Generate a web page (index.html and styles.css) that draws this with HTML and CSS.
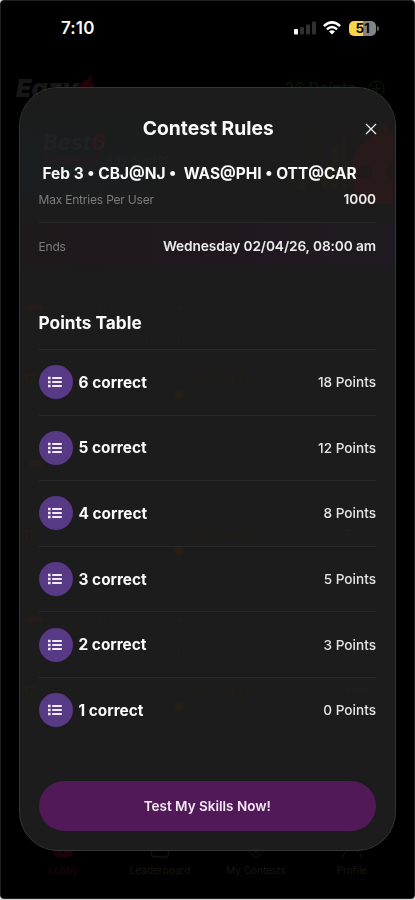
FILE: index.html
```html
<!DOCTYPE html>
<html lang="en">
<head>
<meta charset="utf-8">
<title>Contest Rules</title>
<link rel="stylesheet" href="styles.css">
</head>
<body>
<svg width="0" height="0" class="defs"><symbol id="list" viewBox="0 0 14 12"><path d="M4.2 2h9.6M4.2 6h9.6M4.2 10h9.6" stroke="#f0ebf7" stroke-width="1.8"/><path d="M0 .7h2.6v2.6H0zM0 4.7h2.6v2.6H0zM0 8.7h2.6v2.6H0z" fill="#f0ebf7"/></symbol></svg>
<main class="screen">
  <header class="status">
    <span class="time">7:10</span>
    <div class="indicators">
      <svg width="22" height="14" viewBox="0 0 22 14"><rect x="0" y="8" width="4" height="5.5" rx="1" fill="#fff"/><g fill="#303030"><rect x="6" y="6" width="4" height="7.5" rx="1"/><rect x="12" y="3.5" width="4" height="10" rx="1"/><rect x="18" y="0.5" width="4" height="13" rx="1"/></g></svg>
      <svg width="18" height="14" viewBox="0 0 18 14"><g fill="none" stroke="#fff" stroke-width="2.5"><path d="M.9 5.1Q9-2.4 17.1 5.1"/><path d="M3.9 8.4Q9 3.7 14.1 8.4"/></g><path d="M6 10.5Q9 8 12 10.5L9 13.5Z" fill="#fff"/></svg>
      <div class="battery"><span>51</span></div><i class="cap"></i>
    </div>
  </header>
  <div class="brand">
    <div class="logo">Eazy<svg width="18" height="20" viewBox="0 0 18 20"><path d="M0 14L7 7 11 5 15 0 14 7 17 12 12 20H3Z" fill="#220204"/></svg></div>
    <div class="wallet">26 Points <svg width="17" height="17" viewBox="0 0 17 17" fill="none" stroke="#08150b" stroke-width="1.3"><circle cx="8.5" cy="8.5" r="7.5"/><path d="M8.5 4v9M4 8.5h9"/></svg></div>
  </div>
  <nav class="tabs">
    <div class="tab lobby"><svg width="20" height="20" viewBox="0 0 20 20"><rect x=".5" width="19" height="19" rx="4" fill="#1b0109"/><path d="M10 9v7" stroke="#080003" stroke-width="2"/></svg><span>Lobby</span></div>
    <div class="tab"><svg width="20" height="20" viewBox="0 0 20 20" fill="none" stroke="#121212" stroke-width="1.3"><rect x="1.5" y="2" width="17" height="17" rx="3"/><path d="M6 11h4"/></svg><span>Leaderboard</span></div>
    <div class="tab"><svg width="20" height="20" viewBox="0 0 20 20" fill="none"><path d="M1 3v7q1 5 9 9 8-4 9-9V3" stroke="#121212"/><circle cx="10" cy="10" r="4" stroke="#220207" stroke-width="2"/></svg><span>My Contests</span></div>
    <div class="tab"><svg width="20" height="20" viewBox="0 0 20 20" fill="none" stroke="#151515"><path d="M1.5 19v-1c1-8 16-8 17 0v1"/></svg><span>Profile</span></div>
  </nav>

  <section class="modal">
    <div class="backdrop">
      <div class="banner"></div>
      <b class="ghost best">Best<em>6</em></b>
      <b class="ghost choose">Choose 6. <em>Any sports.</em></b>
      <svg class="ghost art" width="100" height="82" viewBox="0 0 100 82"><path d="M37 24h5v42h-5zM47 16h4v50h-4zM27 46h5v20h-5zM2 60h8v8H2z" fill="#1f1e19"/><path d="M58 82V35L68 20 82 12 89 0 98 12V82Z" fill="#28191a"/><circle cx="70" cy="50" r="7" fill="#201a1a"/><circle cx="97" cy="50" r="7" fill="#201a1a"/></svg>
      <div class="ghost strip"></div>
      <div class="ghost card one"><p><mark></mark> NBA &nbsp; &nbsp; &nbsp; Player Contest <i></i> Result</p><p>Player Props with the Most PTS+REB+AST</p><div><s>17</s><u></u><q>50 Points</q><small>Free</small></div></div>
      <div class="ghost card two"><p><mark></mark> NBA &nbsp; &nbsp; &nbsp; Player Contest <i></i> Result</p><p>Player Props with the Most PTS+REB+AST</p><div><s>17</s><u></u><q>50 Points</q><small>Free</small></div></div>
      <div class="ghost card three"><p><mark></mark> NBA &nbsp; &nbsp; &nbsp; Player Contest <i></i> Result</p><p>Player Props with the Most PTS+REB+AST</p><div><s>17</s><u></u><q>50 Points</q><small>Free</small></div></div>
    </div>
    <div class="content">
      <div class="heading"><h1>Contest Rules</h1><svg class="close" width="12" height="12" viewBox="0 0 12 12"><path d="M1 1l10 10M11 1L1 11" stroke="#eee" stroke-width="1.3"/></svg></div>
      <h2>Feb 3 • CBJ@NJ •&nbsp; WAS@PHI • OTT@CAR</h2>
      <div class="info entries"><span>Max Entries Per User</span><strong>1000</strong></div>
      <div class="info ends"><span>Ends</span><strong>Wednesday 02/04/26, 08:00 am</strong></div>
      <h3>Points Table</h3>
      <ul>
        <li><span class="icon"><svg width="14" height="12"><use href="#list"/></svg></span><b>6 correct</b><span class="points">18 Points</span></li>
        <li><span class="icon"><svg width="14" height="12"><use href="#list"/></svg></span><b>5 correct</b><span class="points">12 Points</span></li>
        <li><span class="icon"><svg width="14" height="12"><use href="#list"/></svg></span><b>4 correct</b><span class="points">8 Points</span></li>
        <li><span class="icon"><svg width="14" height="12"><use href="#list"/></svg></span><b>3 correct</b><span class="points">5 Points</span></li>
        <li><span class="icon"><svg width="14" height="12"><use href="#list"/></svg></span><b>2 correct</b><span class="points">3 Points</span></li>
        <li><span class="icon"><svg width="14" height="12"><use href="#list"/></svg></span><b>1 correct</b><span class="points">0 Points</span></li>
      </ul>
      <button>Test My Skills Now!</button>
    </div>
  </section>
</main>
</body>
</html>
```
FILE: styles.css
```css
* { box-sizing: border-box; }
body { margin: 0; background: #d8d8d8; font-family: Inter, sans-serif; color: #fafafa; overflow: hidden; }
h1, h2, h3, ul, p { margin: 0; padding: 0; }
.defs { position: absolute; }
.screen { position: relative; height: 899px; background: #000; border: 1px solid #202020; border-radius: 4px; display: flex; flex-direction: column; overflow: hidden; }
.status { display: flex; justify-content: space-between; height: 54px; padding: 0 35px 0 60px; align-items: center; }
.time { font-size: 17px; font-weight: 600; letter-spacing: .1px; }
.indicators { display: flex; align-items: center; }
.indicators svg + svg { margin-left: 7px; }
.battery { width: 27px; height: 15px; margin-left: 8px; border-radius: 5px; background: linear-gradient(90deg, #f8d548 51%, #858585 51%); color: #080808; font-size: 13.5px; line-height: 15px; font-weight: 700; text-align: center; letter-spacing: -.3px; }
.cap { width: 2px; height: 5px; margin-left: 1px; border-radius: 0 2px 2px 0; background: #666; }
.brand { display: flex; justify-content: space-between; padding: 19px 29px 0 15px; }
.logo { display: flex; font: italic 900 25px/28px Inter, sans-serif; color: #171717; }
.logo svg { margin-left: -1px; }
.wallet { display: flex; align-items: center; gap: 12px; font-size: 16px; font-weight: 500; color: #06180b; height: 28px; }
.tabs { display: grid; grid-template-columns: 124px 70px 122px 70px; margin-top: auto; height: 60px; font-size: 10px; color: #171717; }
.tab { display: flex; flex-direction: column; align-items: center; gap: 6px; white-space: nowrap; }
.lobby { color: #1d0309; font-weight: 600; }

.modal { position: absolute; top: 86px; left: 18px; width: 377px; height: 764px; border: 1px solid #353535; border-radius: 39px; background: #1c1c1c; overflow: hidden; }
.backdrop { position: absolute; inset: 0; filter: blur(.5px); }
.banner { height: 108px; background: linear-gradient(#1c1c1c 20%, transparent 65%), linear-gradient(90deg, #1a1e20, #1c1c1c 40%, #1c1c1c 75%, #201b1a); }
.ghost { position: absolute; }
.best { left: 23px; top: 41px; font-size: 22px; font-style: italic; color: #202122; }
.best em { color: #2f1a1d; }
.choose { left: 23px; top: 64px; font-size: 12px; color: #281a1e; white-space: nowrap; }
.choose em { color: #202020; }
.art { right: 0; top: 34px; }
.strip { left: 0; right: 0; top: 135px; height: 43px; background: linear-gradient(90deg, #1e191b, #201820 60%, #201b22); }
.card { left: 3px; right: 2px; font-size: 10px; line-height: 16px; color: #1f1f1f; }
.card p { padding-left: 4px; white-space: nowrap; margin-bottom: 16px; }
.card mark { display: inline-block; width: 17px; height: 7px; background: #241c18; border-radius: 3px; }
.card i { display: inline-block; width: 5px; height: 5px; border-radius: 50%; background: #182219; margin: 0 7px 0 18px; }
.card div { display: grid; grid-template-columns: 30px 121px 172px 1fr; font-size: 13px; margin-top: 24px; }
.card s { text-decoration: none; color: #261f16; }
.card u { width: 10px; height: 10px; margin-top: 3px; border-radius: 50%; background: #241e14; grid-column: 3; }
.card q { quotes: none; grid-column: 3; grid-row: 1; padding-left: 18px; color: #211e17; }
.card small { color: #202020; grid-column: 4; grid-row: 1; }
.one { top: 211px; }
.two { top: 367px; }
.three { top: 523px; }
.content { position: relative; height: 100%; padding: 27px 19px 19px 18.5px; display: flex; flex-direction: column; }
.heading { display: flex; height: 26px; align-items: center; justify-content: center; position: relative; padding-left: 2px; }
h1 { font-size: 19.3px; line-height: 26px; font-weight: 650; }
.close { position: absolute; right: -.5px; top: 8px; }
h2 { height: 21px; margin: 22px 0 0 4px; font-size: 15.45px; line-height: 21px; font-weight: 650; white-space: nowrap; }
.info { display: flex; justify-content: space-between; align-items: center; font-size: 12px; letter-spacing: -.2px; color: #7c7c7c; }
.info strong { font-size: 13.7px; letter-spacing: -.1px; font-weight: 600; color: #ececec; }
.entries { height: 39px; padding-bottom: 8px; border-bottom: 1px solid #292929; }
.ends { height: 46px; }
h3 { margin-top: 42px; font-size: 17.3px; line-height: 24px; font-weight: 650; }
ul { list-style: none; margin-top: 14px; }
li { display: flex; align-items: center; height: 65.6px; border-top: 1px solid #292929; }
.icon { width: 34px; height: 34px; display: grid; place-items: center; border-radius: 50%; background: #583985; margin-right: 6px; }
.icon svg { margin-right: 1px; }
li b { font-size: 15.4px; font-weight: 650; }
.points { margin-left: auto; font-size: 13.6px; font-weight: 550; color: #e6e6e6; }
button { display: block; flex: none; width: 100%; height: 50px; margin-top: auto; border: 0; border-radius: 25px; background: #521958; color: #f3eaf4; font: 600 13.5px Inter, sans-serif; }
```
